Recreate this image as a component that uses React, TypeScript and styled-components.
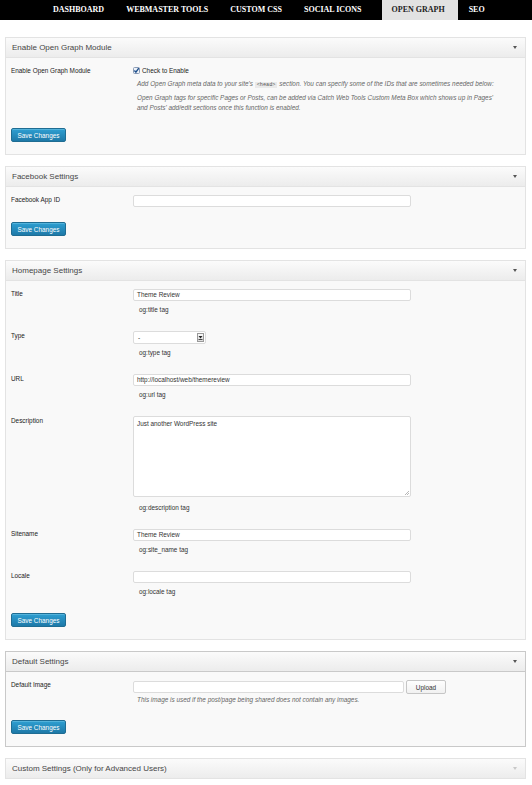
import React from "react";
import styled, { createGlobalStyle } from "styled-components";

const GlobalStyle = createGlobalStyle`
  html, body {
    margin: 0;
    padding: 0;
    background: #ffffff;
    font-family: "Liberation Sans", Arial, Helvetica, sans-serif;
  }
  * { box-sizing: border-box; }
`;

const Nav = styled.ul`
  display: flex;
  height: 20px;
  margin: 0;
  padding: 0 0 0 42px;
  list-style: none;
  background: #000;
`;

const Tab = styled.li<{ $active?: boolean }>`
  margin-left: ${(p) => (p.$active ? "9px" : "0")};
  padding: ${(p) => (p.$active ? "0 13px 0 10px" : "0 11px")};
  line-height: 20px;
  font-family: "Liberation Serif", "Times New Roman", serif;
  font-weight: bold;
  font-size: 8px;
  text-transform: uppercase;
  color: ${(p) => (p.$active ? "#222" : "#fff")};
  background: ${(p) => (p.$active ? "#e2e2e2" : "transparent")};
`;

const Page = styled.main`
  display: flex;
  flex-direction: column;
  gap: 11px;
  padding: 17px 6px 0 5px;
`;

const Panel = styled.section<{ $focus?: boolean }>`
  border: 1px solid ${(p) => (p.$focus ? "#c9c9c9" : "#e3e3e3")};
  background: #f9f9f9;
`;

const PanelHeader = styled.header<{ $open?: boolean; $focus?: boolean }>`
  display: flex;
  align-items: center;
  justify-content: space-between;
  height: ${(p) => (p.$open ? "20px" : "19px")};
  padding: 0 8px 0 6px;
  background: linear-gradient(#fbfbfb, #ececec);
  border-bottom: ${(p) =>
    p.$open ? `1px solid ${p.$focus ? "#c9c9c9" : "#e3e3e3"}` : "none"};
  font-size: 8px;
  color: #464646;
`;

const Arrow = styled.span<{ $muted?: boolean }>`
  width: 0;
  height: 0;
  border-left: 2px solid transparent;
  border-right: 2px solid transparent;
  border-top: 3px solid ${(p) => (p.$muted ? "#c8c8c8" : "#555")};
`;

const Body = styled.div`
  display: flex;
  flex-direction: column;
  padding: 0 5px;
`;

const Row = styled.div<{ $top?: number }>`
  display: grid;
  grid-template-columns: 122px 1fr;
  padding: ${(p) => p.$top ?? 8}px 0 7px;
`;

const Label = styled.div`
  font-size: 6.4px;
  line-height: 9px;
  color: #222;
`;

const Field = styled.div`
  display: flex;
  flex-direction: column;
  align-items: flex-start;
`;

const Inline = styled.div`
  display: flex;
  align-items: center;
  gap: 2px;
`;

const TextBox = styled.div<{ $w?: number }>`
  width: ${(p) => p.$w ?? 278}px;
  height: 12px;
  padding: 0 3px;
  background: #fff;
  border: 1px solid #dcdcdc;
  border-radius: 2px;
  font-size: 6.4px;
  line-height: 10px;
  color: #333;
`;

const TextArea = styled.div`
  position: relative;
  width: 278px;
  height: 81px;
  margin-bottom: 2px;
  padding: 2px 3px;
  background: #fff;
  border: 1px solid #dcdcdc;
  border-radius: 2px;
  font-size: 6.4px;
  line-height: 9px;
  color: #333;
`;

const Grip = styled.svg`
  position: absolute;
  right: 1px;
  bottom: 1px;
`;

const Select = styled.div`
  display: flex;
  align-items: center;
  justify-content: space-between;
  width: 73px;
  height: 13px;
  padding: 0 1px 0 4px;
  background: #fff;
  border: 1px solid #dcdcdc;
  border-radius: 2px;
  font-size: 6.4px;
  color: #333;
`;

const SelectButton = styled.span`
  display: flex;
  align-items: center;
  justify-content: center;
  width: 7px;
  height: 9px;
  background: linear-gradient(#fafafa, #dcdcdc);
  border: 1px solid #999;
`;

const Hint = styled.div`
  margin: 3px 0 0 6px;
  font-size: 6.4px;
  line-height: 12px;
  color: #333;
`;

const Note = styled.p<{ $gap?: number }>`
  margin: ${(p) => p.$gap ?? 4}px 0 0 4px;
  font-size: 6.4px;
  line-height: 10px;
  font-style: italic;
  color: #666;
  white-space: nowrap;
`;

const Code = styled.code`
  padding: 0 2px;
  background: #eaeaea;
  font-family: "Liberation Mono", monospace;
  font-style: normal;
  font-size: 5.2px;
  line-height: 6px;
  color: #555;
`;

const CheckLine = styled.label`
  display: flex;
  align-items: center;
  gap: 2px;
  height: 8px;
  font-size: 6.4px;
  color: #222;
`;

const Submit = styled.div`
  display: flex;
  padding: 8px 0 12px;
`;

const Button = styled.button`
  width: 55px;
  height: 14px;
  padding: 0;
  border: 1px solid #1f6d93;
  border-radius: 2px;
  background: linear-gradient(#2e9fd2, #1e79a8);
  box-shadow: inset 0 1px 0 rgba(120, 200, 230, 0.5);
  font-family: "Liberation Sans", Arial, sans-serif;
  font-size: 6.4px;
  color: #fff;
`;

const Upload = styled.button`
  width: 40px;
  height: 14px;
  padding: 0;
  border: 1px solid #c6c6c6;
  border-radius: 2px;
  background: linear-gradient(#fefefe, #f1f1f1);
  font-family: "Liberation Sans", Arial, sans-serif;
  font-size: 6.4px;
  color: #333;
`;

const tabs = ["Dashboard", "Webmaster Tools", "Custom CSS", "Social Icons", "Open Graph", "SEO"];

function Header({ title, open = true, focus, muted }: { title: string; open?: boolean; focus?: boolean; muted?: boolean }) {
  return (
    <PanelHeader $open={open} $focus={focus}>
      <span>{title}</span>
      <Arrow $muted={muted} />
    </PanelHeader>
  );
}

function SaveRow() {
  return (
    <Submit>
      <Button type="button">Save Changes</Button>
    </Submit>
  );
}

function CheckIcon() {
  return (
    <svg width="7" height="7" viewBox="0 0 7 7">
      <rect x="0.5" y="0.5" width="6" height="6" rx="1" fill="#eef2f8" stroke="#8a9bb5" />
      <path d="M1.4 3.6 L2.9 5.2 L5.8 1.2" fill="none" stroke="#1d4f8c" strokeWidth="1.4" />
    </svg>
  );
}

export default function App() {
  return (
    <>
      <GlobalStyle />
      <Nav>
        {tabs.map((t) => (
          <Tab key={t} $active={t === "Open Graph"}>
            {t}
          </Tab>
        ))}
      </Nav>
      <Page>
        <Panel>
          <Header title="Enable Open Graph Module" />
          <Body>
            <Row>
              <Label>Enable Open Graph Module</Label>
              <Field>
                <CheckLine>
                  <CheckIcon />
                  Check to Enable
                </CheckLine>
                <Note $gap={5}>
                  Add Open Graph meta data to your site's <Code>&lt;head&gt;</Code> section. You can
                  specify some of the IDs that are sometimes needed below:
                </Note>
                <Note>
                  Open Graph tags for specific Pages or Posts, can be added via Catch Web Tools Custom
                  Meta Box which shows up in Pages'
                  <br />
                  and Posts' add/edit sections once this function is enabled.
                </Note>
              </Field>
            </Row>
            <SaveRow />
          </Body>
        </Panel>

        <Panel>
          <Header title="Facebook Settings" />
          <Body>
            <Row>
              <Label>Facebook App ID</Label>
              <Field>
                <TextBox />
              </Field>
            </Row>
            <SaveRow />
          </Body>
        </Panel>

        <Panel>
          <Header title="Homepage Settings" />
          <Body>
            <Row>
              <Label>Title</Label>
              <Field>
                <TextBox>Theme Review</TextBox>
                <Hint>og:title tag</Hint>
              </Field>
            </Row>
            <Row>
              <Label>Type</Label>
              <Field>
                <Select>
                  <span>-</span>
                  <SelectButton>
                    <svg width="5" height="5" viewBox="0 0 5 5">
                      <path d="M0.5 1 L4.5 1 L2.5 3.4 Z" fill="#222" />
                      <rect x="0.5" y="4" width="4" height="0.8" fill="#222" />
                    </svg>
                  </SelectButton>
                </Select>
                <Hint>og:type tag</Hint>
              </Field>
            </Row>
            <Row>
              <Label>URL</Label>
              <Field>
                <TextBox>http://localhost/web/themereview</TextBox>
                <Hint>og:url tag</Hint>
              </Field>
            </Row>
            <Row>
              <Label>Description</Label>
              <Field>
                <TextArea>
                  Just another WordPress site
                  <Grip width="5" height="5" viewBox="0 0 5 5">
                    <path d="M1 5 L5 1 M3 5 L5 3" stroke="#999" strokeWidth="0.7" />
                  </Grip>
                </TextArea>
                <Hint>og:description tag</Hint>
              </Field>
            </Row>
            <Row>
              <Label>Sitename</Label>
              <Field>
                <TextBox>Theme Review</TextBox>
                <Hint>og:site_name tag</Hint>
              </Field>
            </Row>
            <Row>
              <Label>Locale</Label>
              <Field>
                <TextBox />
                <Hint>og:locale tag</Hint>
              </Field>
            </Row>
            <SaveRow />
          </Body>
        </Panel>

        <Panel $focus>
          <Header title="Default Settings" focus />
          <Body>
            <Row $top={8}>
              <Label>Default Image</Label>
              <Field>
                <Inline>
                  <TextBox $w={271} />
                  <Upload type="button">Upload</Upload>
                </Inline>
                <Note $gap={1}>
                  This image is used if the post/page being shared does not contain any images.
                </Note>
              </Field>
            </Row>
            <SaveRow />
          </Body>
        </Panel>

        <Panel>
          <Header title="Custom Settings (Only for Advanced Users)" open={false} muted />
        </Panel>
      </Page>
    </>
  );
}
